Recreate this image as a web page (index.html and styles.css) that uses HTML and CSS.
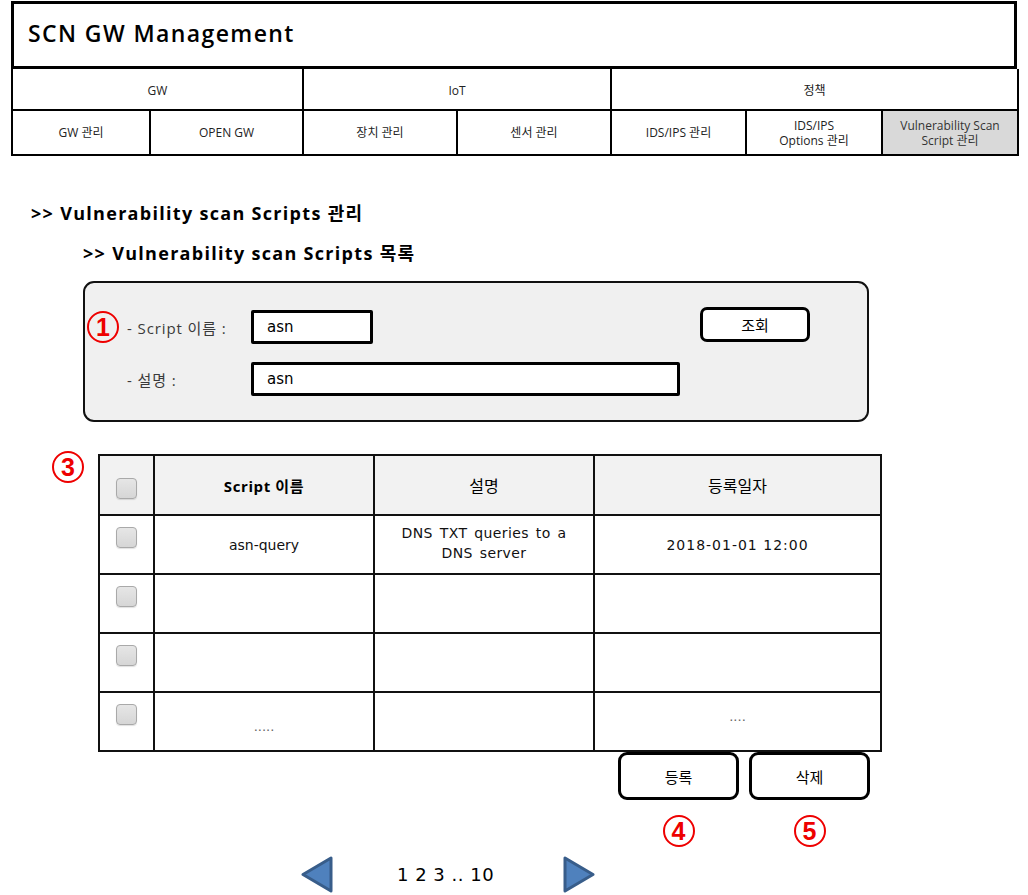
FILE: index.html
```html
<!DOCTYPE html>
<html lang="ko">
<head>
<meta charset="utf-8">
<title>SCN GW Management</title>
<link rel="stylesheet" href="styles.css">
</head>
<body>
<div class="page">
  <header class="top">
    <div class="title">SCN GW Management</div>
    <nav class="nav">
      <div class="cell group g1">GW</div>
      <div class="cell group g2">IoT</div>
      <div class="cell group g3">정책</div>
      <div class="cell">GW 관리</div>
      <div class="cell">OPEN GW</div>
      <div class="cell">장치 관리</div>
      <div class="cell">센서 관리</div>
      <div class="cell">IDS/IPS 관리</div>
      <div class="cell">IDS/IPS<br>Options 관리</div>
      <div class="cell active">Vulnerability Scan<br>Script 관리</div>
    </nav>
  </header>

  <h1 class="h1">&gt;&gt; Vulnerability scan Scripts 관리</h1>
  <h2 class="h2">&gt;&gt; Vulnerability scan Scripts 목록</h2>

  <section class="search">
    <span class="mark mark-1">1</span>
    <div class="search-fields">
      <div class="field">
        <span class="label">- Script 이름 :</span>
        <span class="input short">asn</span>
      </div>
      <div class="field">
        <span class="label">- 설명 :</span>
        <span class="input long">asn</span>
      </div>
    </div>
    <button class="btn query">조회</button>
  </section>

  <section class="list">
    <span class="mark mark-3">3</span>
    <table class="grid">
      <colgroup>
        <col class="c-chk"><col class="c-name"><col class="c-desc"><col class="c-date">
      </colgroup>
      <thead>
        <tr>
          <th class="chk"><span class="box"></span></th>
          <th class="strong">Script 이름</th>
          <th>설명</th>
          <th>등록일자</th>
        </tr>
      </thead>
      <tbody>
        <tr>
          <td class="chk"><span class="box"></span></td>
          <td>asn-query</td>
          <td class="desc">DNS TXT queries to a<br>DNS server</td>
          <td class="date">2018-01-01 12:00</td>
        </tr>
        <tr>
          <td class="chk"><span class="box"></span></td>
          <td></td><td></td><td></td>
        </tr>
        <tr>
          <td class="chk"><span class="box"></span></td>
          <td></td><td></td><td></td>
        </tr>
        <tr>
          <td class="chk"><span class="box"></span></td>
          <td class="dots low">.....</td>
          <td></td>
          <td class="dots high">....</td>
        </tr>
      </tbody>
    </table>
    <div class="actions">
      <button class="btn big">등록</button>
      <button class="btn big">삭제</button>
    </div>
    <div class="marks">
      <span class="mark-slot"><span class="mark">4</span></span>
      <span class="mark-slot"><span class="mark">5</span></span>
    </div>
  </section>

  <div class="pager">
    <svg class="arrow" width="34" height="37" viewBox="0 0 34 37"><polygon points="31,2 31,35 3,18.5" fill="#4f81bd" stroke="#385d8a" stroke-width="3" stroke-linejoin="round"/></svg>
    <span class="pages">1 2 3 .. 10</span>
    <svg class="arrow" width="34" height="37" viewBox="0 0 34 37"><polygon points="3,2 3,35 31,18.5" fill="#4f81bd" stroke="#385d8a" stroke-width="3" stroke-linejoin="round"/></svg>
  </div>
</div>
</body>
</html>
```

FILE: styles.css
```css
* { box-sizing: border-box; }
html, body { margin: 0; padding: 0; background: #fff; }
body {
  font-family: "Open Sans", "Noto Sans CJK KR", sans-serif;
  color: #000;
  width: 1028px;
  height: 895px;
  overflow: hidden;
}
.page { position: relative; padding-top: 1px; }

.top { margin-left: 11px; width: 1006px; }
.title {
  height: 68px;
  border: 3px solid #000;
  display: flex;
  align-items: center;
  padding-left: 14px;
  padding-bottom: 4px;
  font-size: 23px;
  font-weight: 600;
  letter-spacing: 1.4px;
}
.nav {
  display: grid;
  grid-template-columns: 138px 153px 154px 154px 135px 136px 136px;
  grid-template-rows: 42px 45px;
  border-left: 2px solid #000;
}
.cell {
  border-right: 2px solid #000;
  border-bottom: 2px solid #000;
  display: flex;
  align-items: center;
  justify-content: center;
  text-align: center;
  font-size: 12px;
  line-height: 15px;
  color: #222;
}
.group { padding-top: 2px; }
.g1 { grid-column: 1 / 3; }
.g2 { grid-column: 3 / 5; }
.g3 { grid-column: 5 / 8; }
.active { background: #d9d9d9; color: #333; }

.h1 {
  margin: 44px 0 0 31px;
  font-size: 18px;
  font-weight: 700;
  line-height: 26px;
  letter-spacing: 1.3px;
}
.h2 {
  margin: 14px 0 0 83px;
  font-size: 18px;
  font-weight: 700;
  line-height: 26px;
  letter-spacing: 1.3px;
}

.search {
  position: relative;
  margin: 15px 0 0 83px;
  width: 786px;
  height: 141px;
  background: #f0f0f0;
  border: 2px solid #111;
  border-radius: 11px;
  display: flex;
  align-items: flex-start;
  padding: 27px 0 0 42px;
}
.search-fields { display: flex; flex-direction: column; gap: 18px; }
.field { display: flex; align-items: center; }
.label {
  width: 124px;
  font-size: 15px;
  color: #3a3a3a;
  letter-spacing: 0.9px;
}
.input {
  height: 34px;
  border: 3px solid #000;
  border-radius: 2px;
  background: #fff;
  display: flex;
  align-items: center;
  padding-left: 13px;
  font-family: "DejaVu Sans", "Noto Sans CJK KR", sans-serif;
  font-size: 15px;
}
.short { width: 122px; }
.long { width: 429px; }
.btn {
  font-family: "DejaVu Sans", "Noto Sans CJK KR", sans-serif;
  background: #fff;
  border: 3px solid #000;
  color: #000;
  cursor: pointer;
  padding: 0;
}
.query {
  margin: -3px 0 0 20px;
  width: 110px;
  height: 35px;
  border-radius: 7px;
  font-size: 15px;
}

.mark {
  display: inline-flex;
  align-items: center;
  justify-content: center;
  width: 32px;
  height: 32px;
  border: 2px solid #e00;
  border-radius: 50%;
  color: #e00;
  font-family: "Liberation Sans", Arial, sans-serif;
  font-weight: 700;
  font-size: 25px;
  line-height: 1;
  background: transparent;
}
.mark-1 { position: absolute; left: 2px; top: 28px; }

.list { position: relative; margin: 32px 0 0 98px; width: 782px; }
.mark-3 { position: absolute; left: -46px; top: -3px; }

.grid {
  width: 782px;
  border-collapse: collapse;
  table-layout: fixed;
  font-size: 15px;
}
.c-chk { width: 55px; }
.c-name { width: 220px; }
.c-desc { width: 220px; }
.c-date { width: 287px; }
.grid th, .grid td {
  border: 2px solid #111;
  height: 59px;
  text-align: center;
  vertical-align: middle;
  padding: 0;
}
.grid th {
  background: #f2f2f2;
  font-family: "Noto Sans CJK KR", sans-serif;
  font-weight: 400;
  height: 60px;
  font-size: 16px;
}
.grid th.strong {
  font-family: "Open Sans", "Noto Sans CJK KR", sans-serif;
  font-weight: 700;
  font-size: 15px;
  letter-spacing: 0.6px;
}
.grid td {
  font-family: "DejaVu Sans", "Noto Sans CJK KR", sans-serif;
  font-size: 14px;
  color: #111;
}
.grid td.desc { line-height: 20px; word-spacing: 2px; letter-spacing: 0.4px; padding-bottom: 4px; }
.grid td.date { letter-spacing: 1px; }
.grid td.chk { vertical-align: top; padding-top: 11px; }
.grid th.chk { padding-top: 2px; }
.box {
  display: inline-block;
  width: 21px;
  height: 21px;
  border: 1px solid #a9a9a9;
  border-radius: 4px;
  background: linear-gradient(#e6e6e6, #d6d6d6);
  box-shadow: 0 1px 1px rgba(0,0,0,0.12);
  vertical-align: middle;
}
.grid td.dots { color: #666; font-size: 13px; }
.grid td.low { padding-top: 10px; }
.grid td.high { padding-bottom: 10px; }

.actions {
  display: flex;
  justify-content: flex-end;
  gap: 10px;
  padding-right: 10px;
}
.big {
  width: 121px;
  height: 48px;
  border-radius: 9px;
  font-size: 15px;
}
.marks {
  display: flex;
  justify-content: flex-end;
  gap: 10px;
  padding-right: 10px;
  margin-top: 15px;
}
.mark-slot { width: 121px; display: flex; justify-content: center; }

.pager {
  display: flex;
  align-items: center;
  margin: 9px 0 0 300px;
}
.pages {
  margin: 0 64px 0 63px;
  width: 101px;
  font-family: "DejaVu Sans", sans-serif;
  font-size: 18px;
  letter-spacing: 0.5px;
}
```
